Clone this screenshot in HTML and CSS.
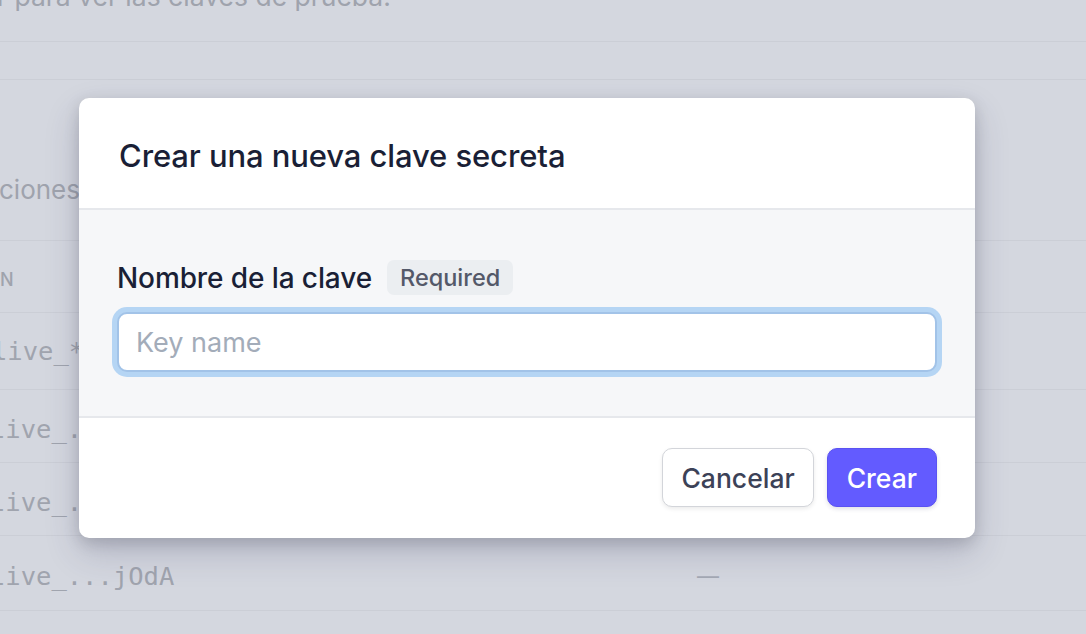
FILE: index.html
```html
<!DOCTYPE html>
<html lang="es">
<head>
<meta charset="utf-8">
<title>Crear una nueva clave secreta</title>
<link rel="stylesheet" href="styles.css">
</head>
<body>
<div class="page">
  <div class="intro"><p class="intro-text">r para ver las claves de prueba.</p></div>
  <div class="blank-row"></div>
  <div class="section"><span class="section-text">ciones</span></div>
  <div class="table">
    <div class="trow thead"><span class="th">N</span><span></span></div>
    <div class="trow trow-first"><span class="mono">live_*</span><span></span></div>
    <div class="trow"><span class="mono mono-shift">live_.</span><span></span></div>
    <div class="trow"><span class="mono mono-shift">live_.</span><span></span></div>
    <div class="trow trow-last"><span class="mono mono-shift">live_...jOdA</span><span class="dash">—</span></div>
  </div>
</div>

<div class="modal" role="dialog" aria-labelledby="modal-title">
  <div class="modal-head">
    <h2 class="modal-title" id="modal-title">Crear una nueva clave secreta</h2>
  </div>
  <div class="modal-body">
    <div class="field-label">
      <label for="key-name" class="label-text">Nombre de la clave</label>
      <span class="badge">Required</span>
    </div>
    <input id="key-name" class="text-input" type="text" placeholder="Key name">
  </div>
  <div class="modal-foot">
    <button class="btn btn-secondary" type="button">Cancelar</button>
    <button class="btn btn-primary" type="button">Crear</button>
  </div>
</div>
</body>
</html>
```

FILE: styles.css
```css
* { box-sizing: border-box; }

body {
  margin: 0;
  width: 1086px;
  height: 634px;
  overflow: hidden;
  position: relative;
  background: #d4d7df;
  font-family: Inter, "Noto Sans", sans-serif;
  color: #9fa3ad;
}

/* ---------- background page ---------- */
.page {
  width: 100%;
  display: flow-root;
}

.intro {
  display: flow-root;
  height: 42px;
  border-bottom: 1px solid #cbced6;
}

.intro-text {
  margin: -20px 0 0 -3px;
  font-size: 26.5px;
  line-height: 32px;
  white-space: nowrap;
}

.blank-row {
  height: 38px;
  border-bottom: 1px solid #cbced6;
}

.section {
  height: 161px;
  padding-top: 90px;
  border-bottom: 1px solid #cbced6;
  font-size: 26px;
  line-height: 40px;
}

.section-text {
  margin-left: -1px;
}

.trow {
  display: grid;
  grid-template-columns: 697px 1fr;
  align-items: center;
  height: 73px;
  padding-top: 5px;
  border-bottom: 1px solid #cbced6;
}

.thead {
  height: 72px;
  padding-top: 5px;
}

.trow-first {
  height: 77px;
  padding-top: 0;
}

.trow-last {
  height: 75px;
}

.th {
  font-size: 18px;
  font-weight: 500;
  letter-spacing: 0.5px;
  text-transform: uppercase;
}

.mono {
  font-family: "DejaVu Sans Mono", "Liberation Mono", monospace;
  font-size: 25.5px;
  margin-left: -8px;
  white-space: nowrap;
  color: #a0a4ae;
}

.mono-shift {
  margin-left: -10px;
}

.dash {
  font-size: 22px;
  color: #a4a9b4;
}

/* ---------- modal ---------- */
.modal {
  position: absolute;
  left: 79px;
  top: 98px;
  width: 896px;
  background: #fff;
  border-radius: 10px;
  overflow: hidden;
  box-shadow: 0 15px 35px rgba(50, 50, 93, 0.2), 0 5px 15px rgba(0, 0, 0, 0.15);
}

.modal-head {
  height: 112px;
  display: flex;
  align-items: center;
  padding: 4px 40px 0;
  border-bottom: 2px solid #e6e8ec;
}

.modal-title {
  margin: 0;
  font-size: 31px;
  font-weight: 500;
  color: #1a1f36;
  letter-spacing: -0.1px;
}

.modal-body {
  background: #f6f7f9;
  padding: 50px 38px 44px;
  border-bottom: 2px solid #e6e8ec;
}

.field-label {
  display: flex;
  align-items: center;
  gap: 15px;
  height: 35px;
}

.label-text {
  font-size: 28px;
  font-weight: 500;
  color: #1a1f36;
  letter-spacing: -0.1px;
}

.badge {
  display: inline-flex;
  align-items: center;
  height: 35px;
  padding: 0 13px;
  border-radius: 7px;
  background: #ebeef1;
  color: #545969;
  font-size: 23.5px;
  font-weight: 500;
}

.text-input {
  display: block;
  width: 100%;
  height: 60px;
  margin-top: 17px;
  padding: 0 17px;
  border: 2px solid #a2c3e8;
  border-radius: 10px;
  background: #fff;
  box-shadow: 0 0 0 5px #b5d5f4;
  font-family: Inter, "Noto Sans", sans-serif;
  font-size: 27px;
  color: #1a1f36;
  outline: none;
}

.text-input::placeholder {
  color: #a3acb9;
}

.modal-foot {
  display: flex;
  justify-content: flex-end;
  gap: 13px;
  padding: 30px 38px 31px;
}

.btn {
  height: 59px;
  padding: 0 18px;
  border-radius: 10px;
  font-family: Inter, "Noto Sans", sans-serif;
  font-size: 26.5px;
  font-weight: 500;
  cursor: pointer;
}

.btn-secondary {
  background: #fff;
  color: #3c4257;
  border: 1px solid #d3d5da;
  box-shadow: 0 2px 4px rgba(0, 0, 0, 0.08);
}

.btn-primary {
  padding: 0 19px;
  background: #635bff;
  color: #fff;
  border: 1px solid #5a52f2;
  box-shadow: 0 2px 4px rgba(50, 50, 93, 0.15);
}
```
